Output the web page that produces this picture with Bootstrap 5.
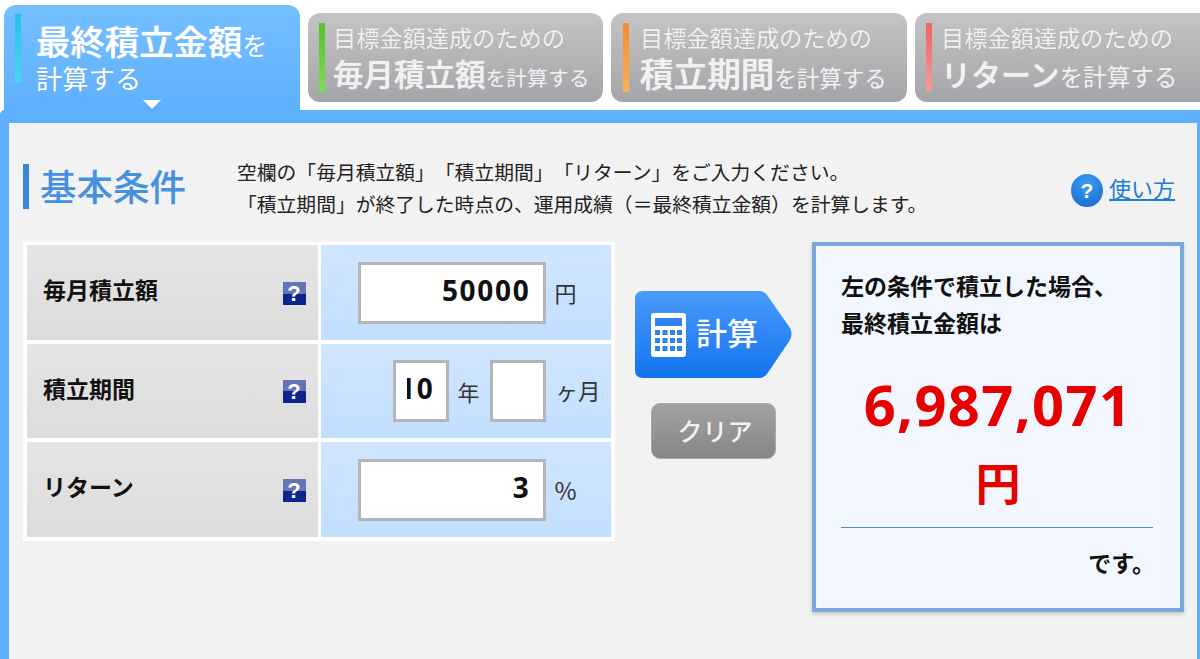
<!doctype html>
<html lang="ja"><head><meta charset="utf-8"><title>積立計算</title>
<link rel="stylesheet" href="https://cdn.jsdelivr.net/npm/bootstrap@5.3.0/dist/css/bootstrap.min.css">
<style>
html,body{height:659px;overflow:hidden;background:#fff;font-family:"Noto Sans CJK JP","Noto Sans",sans-serif;color:#111;text-spacing-trim:space-all}
.tabrow{height:110px;padding-left:4px;gap:8px;width:1240px}
.tabx{flex:0 0 296px;height:89px;margin-top:13px;border-radius:12px;background:linear-gradient(#c4c4c6,#a4a5a8);color:#f1f1f1;padding:9px 0 0 11px;gap:8px;line-height:1;white-space:nowrap;text-shadow:0 0 1px #8888}
.tabx.narrow{flex-basis:295px}
.tabx.third{padding-left:12px;gap:11px}
.tabx.fourth{gap:9px}
.tabx.on{height:105px;margin-top:5px;border-radius:12px 12px 0 0;background:linear-gradient(#75bfff,#5fb0fc);padding:8px 0 0 11px;gap:15px;position:relative;color:#fff}
.tbar{flex:0 0 6px;height:69px;margin-top:1px}
.tabline1{font-size:23.2px;line-height:30px}
.tabline2{font-size:30.5px;line-height:42px;font-weight:500;text-shadow:0 0 1px #fff}
.tabline2 span{font-size:20.8px;font-weight:400;text-shadow:none}
.tabline2.t3{font-size:33.6px}.tabline2.t3 span{font-size:22.5px}
.tabline2.t4{font-size:30px}.tabline2.t4 span{font-size:23.6px}
.on .big{font-size:34.4px;line-height:48px;font-weight:500;margin-top:3px;text-shadow:0 0 1px #fff}
.on .big span{font-size:25px;font-weight:400;text-shadow:none}
.on .sm{font-size:26.3px;line-height:26px;margin-top:-3px}
.tri{position:absolute;left:139px;bottom:1px;width:18px;height:9px;background:#fff;clip-path:polygon(0 0,100% 0,50% 100%)}
.panelx{height:549px;background:#f2f2f2;border-style:solid;border-color:#5fb0fc;border-width:13px 3px 0 9px;border-radius:5px 0 0 0;padding:41px 0 0 14px}
.headx{height:78px}
.titlex{width:214px;height:45px;border-left:6px solid #3a85dc;padding-left:11px;font-size:36.5px;line-height:43px;font-weight:500;color:#4590df;white-space:nowrap}
.descx{font-size:19.8px;line-height:32px;margin-top:-8px;white-space:nowrap;width:834px;color:#222}
.howx{gap:6px;margin-top:10px;font-size:22px;line-height:33px;color:#1b7fd1;text-decoration:underline}
.howtext{margin-top:-3px}
.helpc{width:32px;height:33px;border-radius:50%;background:radial-gradient(circle at 50% 30%,#3f9cf0,#1467cf);color:#fff;font:700 21px/33px "Liberation Sans",sans-serif;text-align:center;display:block}
.tblx{width:592px;height:299px;background:#fff;padding:3px 4px 4px;display:grid;grid-template-columns:290.5px 290.5px;grid-template-rows:95px 94px 95px;gap:4px 3px}
.lblx{background:linear-gradient(#e5e5e5,#dcdcdc);padding:0 12px 0 16px;font-size:23px;font-weight:700;line-height:1}
.lbltext{margin-top:-6px}
.valx{background:linear-gradient(#d0e5ff,#c2dffe);padding-left:37px;font-size:22px;color:#333}
.qx{width:23px;height:23px;background:linear-gradient(#6474b4 50%,#0c2490 50%);color:#fff;font:700 22px/23px "Liberation Sans",sans-serif;text-align:center;margin-top:1px}
.numx.form-control{height:62px;border:3px solid #b5b5b5;border-radius:0;background:#fff;font:700 28px/1 "Noto Sans",sans-serif;letter-spacing:1.7px;color:#111;text-align:right;padding:0 12px 6px 8px;box-shadow:none}
.w1{width:188px;flex:none}
.numx.w2.form-control{width:56px;flex:none;padding:0 11px 6px 11px;text-align:left}
.valx.two{padding-left:72px}
.u1{margin-left:9px}.u2{margin:0 10px 0 9px}.u3{margin-left:10px;font-size:22.5px}
.pct{font-size:24px}
.midx{width:157px;margin:49px 20px 0;gap:25px}
.calcx.btn{width:157px;height:87px;border:0;border-radius:0;padding:0 0 0 16px;gap:10px;background:linear-gradient(#4b9bfa,#1273f0);color:#fff;font-size:31px;font-weight:500;line-height:1;clip-path:path('M8 0H124Q129 0 132 4L155 37Q158 43 155 49L132 83Q129 87 124 87H8Q0 87 0 79V8Q0 0 8 0Z')}
.calcx span{margin-top:-6px}
.clearx.btn{width:125px;height:56px;border:1px solid #a9a9a9;border-radius:9px;background:linear-gradient(#a2a2a2,#868686);color:#f2f2f2;font-size:25px;font-weight:500;line-height:1;padding:0 0 2px 3px}
.resx{width:372px;height:370px;border:4px solid #7ba7d9;background:#f2f7ff;box-shadow:0 2px 4px #0003;padding:21px 25px 0;font-weight:700;font-size:23px;line-height:37px;color:#111}
.amtx{color:#e60000;font:700 56px/78px "Noto Sans","Noto Sans CJK JP",sans-serif;letter-spacing:1.4px;text-align:center;margin-top:24px}
.yenx{color:#e60000;font-size:45px;line-height:78px;text-align:center;height:78px}
.rulex{height:1px;background:#4f8fd0;margin:6px 0 0 0;width:312px}
.tailx{text-align:right;font-size:23px;margin-top:16px}
</style></head><body>
<div class="tabrow d-flex align-items-start">
 <div class="tabx on d-flex"><div class="tbar" style="background:linear-gradient(#25bfe8,#4ad9ea)"></div><div><div class="big">最終積立金額<span>を</span></div><div class="sm">計算する</div></div><div class="tri"></div></div>
 <div class="tabx narrow d-flex"><div class="tbar" style="background:linear-gradient(#52c22f,#7fdc55)"></div><div><div class="tabline1">目標金額達成のための</div><div class="tabline2">毎月積立額<span>を計算する</span></div></div></div>
 <div class="tabx third d-flex"><div class="tbar" style="background:linear-gradient(#f58a2e,#fbb24f)"></div><div><div class="tabline1">目標金額達成のための</div><div class="tabline2 t3">積立期間<span>を計算する</span></div></div></div>
 <div class="tabx fourth d-flex"><div class="tbar" style="background:linear-gradient(#ec6464,#f59b9b)"></div><div><div class="tabline1">目標金額達成のための</div><div class="tabline2 t4">リターン<span>を計算する</span></div></div></div>
</div>
<div class="panelx">
 <div class="headx d-flex align-items-start">
  <div class="titlex">基本条件</div>
  <div class="descx">空欄の「毎月積立額」「積立期間」「リターン」をご入力ください。<br>「積立期間」が終了した時点の、運用成績（＝最終積立金額）を計算します。</div>
  <a class="howx d-flex" href="#"><span class="helpc">?</span><span class="howtext">使い方</span></a>
 </div>
 <div class="d-flex align-items-start">
  <div class="tblx">
   <div class="lblx d-flex align-items-center justify-content-between"><span class="lbltext">毎月積立額</span><span class="qx">?</span></div>
   <div class="valx d-flex align-items-center"><input class="form-control numx w1" value="50000"><span class="u1">円</span></div>
   <div class="lblx d-flex align-items-center justify-content-between"><span class="lbltext">積立期間</span><span class="qx">?</span></div>
   <div class="valx two d-flex align-items-center"><input class="form-control numx w2" dir="rtl" value="10"><span class="u2">年</span><input class="form-control numx w2" value=""><span class="u3">ヶ月</span></div>
   <div class="lblx d-flex align-items-center justify-content-between"><span class="lbltext">リターン</span><span class="qx">?</span></div>
   <div class="valx d-flex align-items-center"><input class="form-control numx w1" value="3"><span class="u1 pct">%</span></div>
  </div>
  <div class="midx d-flex flex-column align-items-center">
   <button class="btn calcx d-flex align-items-center" type="button">
    <svg width="35" height="44" viewBox="0 0 35 44"><rect width="35" height="44" rx="3" fill="#fff"/><rect x="4" y="5" width="27" height="8" fill="#2f80f0"/><g fill="#2f80f0"><rect x="4" y="17" width="5" height="5"/><rect x="11.5" y="17" width="5" height="5"/><rect x="19" y="17" width="5" height="5"/><rect x="26" y="17" width="5" height="5"/><rect x="4" y="25" width="5" height="5"/><rect x="11.5" y="25" width="5" height="5"/><rect x="19" y="25" width="5" height="5"/><rect x="26" y="25" width="5" height="5"/><rect x="4" y="33" width="5" height="5"/><rect x="11.5" y="33" width="5" height="5"/><rect x="19" y="33" width="5" height="5"/><rect x="26" y="33" width="5" height="5"/></g></svg>
    <span>計算</span></button>
   <button class="btn clearx" type="button">クリア</button>
  </div>
  <div class="resx">
   <div>左の条件で積立した場合、<br>最終積立金額は</div>
   <div class="amtx">6,987,071</div>
   <div class="yenx">円</div>
   <div class="rulex"></div>
   <div class="tailx">です。</div>
  </div>
 </div>
</div>
<script src="https://cdn.jsdelivr.net/npm/bootstrap@5.3.0/dist/js/bootstrap.bundle.min.js"></script>
</body></html>
